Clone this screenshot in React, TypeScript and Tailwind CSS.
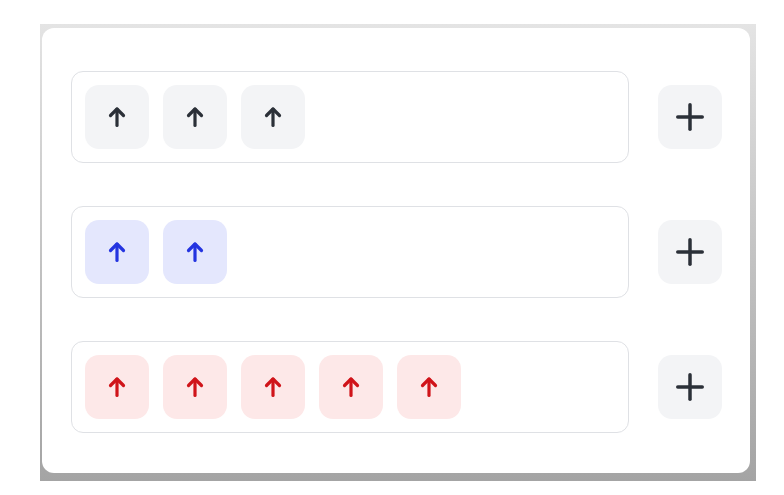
import { Plus } from 'lucide-react';

const rowsConfig = [
  { count: 3, chip: 'bg-[#f3f4f6]', icon: 'text-[#2b3038]' },
  { count: 2, chip: 'bg-[#e4e7fd]', icon: 'text-[#2434e0]' },
  { count: 5, chip: 'bg-[#fde8e8]', icon: 'text-[#d0141a]' },
];

const UpArrow = ({ className }: { className: string }) => (
  <svg
    viewBox="0 0 24 24"
    fill="none"
    stroke="currentColor"
    strokeWidth={3.2}
    strokeLinecap="round"
    strokeLinejoin="round"
    className={className}
  >
    <path d="M12 20.5V4" />
    <path d="M5.5 10.5 12 4l6.5 6.5" />
  </svg>
);

export default function App() {
  return (
    <div className="w-[784px] h-[495px] bg-white pt-[24px] pl-[40px]">
      <div className="w-[716px] h-[457px] bg-gradient-to-b from-[#e4e4e4] to-[#a4a4a4] pl-[2px] pt-[4px]">
        <div className="w-[708px] h-[445px] bg-white rounded-xl pl-[29px] pr-[28px] pt-[43px] flex flex-col gap-[43px]">
          {rowsConfig.map((row, index) => (
            <div key={index} className="flex items-center gap-[29px]">
              <div className="flex-1 h-[92px] border border-[#dfe1e5] rounded-xl p-[13px] flex gap-[14px]">
                {[...Array(row.count)].map((_, i) => (
                  <div
                    key={i}
                    className={`w-[64px] h-[64px] rounded-[14px] flex items-center justify-center ${row.chip}`}
                  >
                    <UpArrow className={`w-[24px] h-[24px] ${row.icon}`} />
                  </div>
                ))}
              </div>
              <div className="w-[64px] h-[64px] rounded-[14px] bg-[#f3f4f6] flex items-center justify-center">
                <Plus className="w-[42px] h-[42px] text-[#2b3038]" strokeWidth={2} />
              </div>
            </div>
          ))}
        </div>
      </div>
    </div>
  );
}
